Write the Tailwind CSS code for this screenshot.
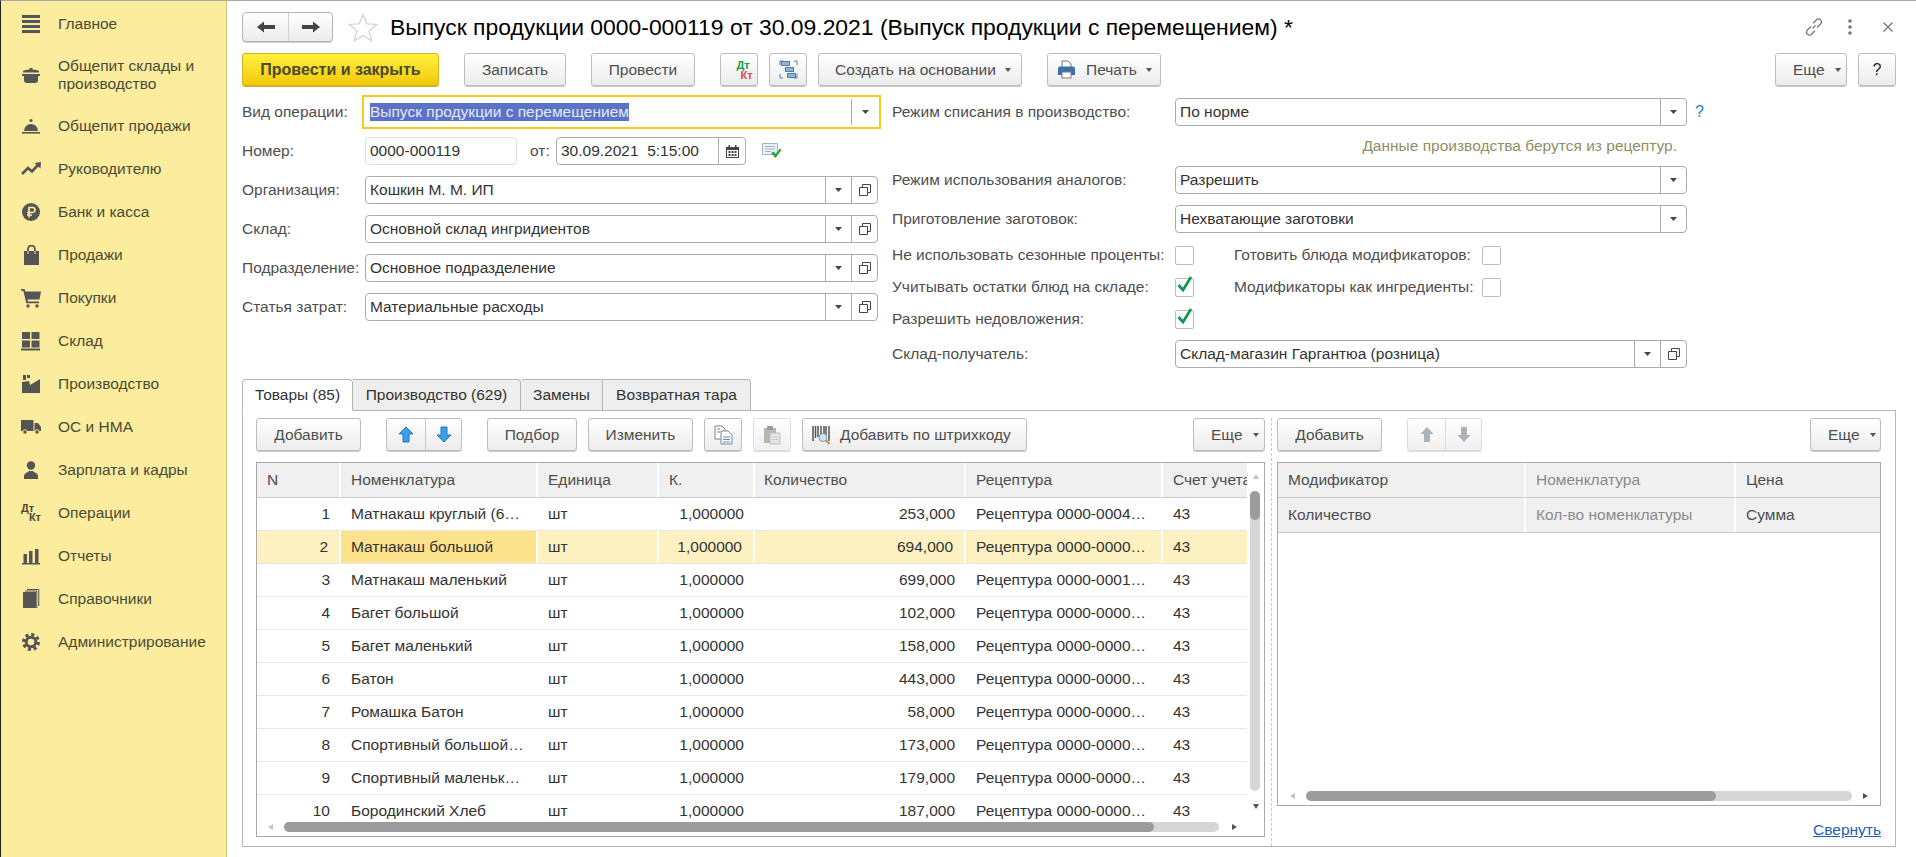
<!DOCTYPE html>
<html lang="ru">
<head>
  <meta charset="UTF-8">
  <title>Выпуск продукции</title>
  <script src="https://cdn.jsdelivr.net/npm/@tailwindcss/browser@4"></script>
</head>
<body class="w-[1916px] h-[857px] overflow-hidden bg-white flex font-['Liberation_Sans',Arial,sans-serif] text-[15.5px] text-[#4e4e4e]">

  <!-- sidebar -->
  <nav class="w-[227px] h-full shrink-0 bg-[#fbec9e] border-l border-l-[#222] border-r border-r-[#cfc27f] border-t border-t-[#a8a8a8] pt-[1px] text-[#4b4b35]">
    <a class="flex items-center h-[43px]"><svg class="ml-[20px] mr-[17px]" width="20" height="20" viewBox="0 0 20 20" fill="#555"><rect x="1" y="1" width="18" height="3"/><rect x="1" y="6" width="18" height="3"/><rect x="1" y="11" width="18" height="3"/><rect x="1" y="16" width="18" height="3"/></svg>Главное</a>
    <a class="flex items-center h-[59px] leading-[18px]"><svg class="ml-[20px] mr-[17px] shrink-0" width="20" height="20" viewBox="0 0 20 20" fill="#555"><path d="M8.500 3h3v1.500c3 .2 5.500.8 6.500 1.500v1.500H2V6c1-.7 3.500-1.300 6.500-1.500z"/><path d="M1 9h18v2h-2v4a3 3 0 0 1-3 3H6a3 3 0 0 1-3-3v-4H1z"/></svg><span>Общепит склады и<br>производство</span></a>
    <a class="flex items-center h-[43px]"><svg class="ml-[20px] mr-[17px]" width="20" height="20" viewBox="0 0 20 20" fill="#555"><circle cx="10" cy="4.500" r="1.500"/><path d="M3 15a7 7 0 0 1 14 0z"/><rect x="1" y="16" width="18" height="1.600"/></svg>Общепит продажи</a>
    <a class="flex items-center h-[43px]"><svg class="ml-[20px] mr-[17px]" width="20" height="20" viewBox="0 0 20 20" fill="#555"><path d="M1 15l6-6 4 3.500 6-6.500" fill="none" stroke="#555" stroke-width="2.600"/><path d="M13.500 4l6.500-1-.5 6.500z"/></svg>Руководителю</a>
    <a class="flex items-center h-[43px]"><svg class="ml-[20px] mr-[17px]" width="20" height="20" viewBox="0 0 20 20" fill="#555"><circle cx="10" cy="10" r="9"/><path d="M8 15.500V5.500h3.500a2.500 2.500 0 0 1 0 5H6M6 13h5" stroke="#fbec9e" fill="none" stroke-width="1.700"/></svg>Банк и касса</a>
    <a class="flex items-center h-[43px]"><svg class="ml-[20px] mr-[17px]" width="20" height="20" viewBox="0 0 20 20" fill="#555"><path d="M3 6h15v14H3z"/><path d="M7 6.500V4a3.500 3.500 0 0 1 7 0v2.500" fill="none" stroke="#555" stroke-width="1.800"/><path d="M7 6v3M14 6v3" stroke="#fbec9e" stroke-width="1"/></svg>Продажи</a>
    <a class="flex items-center h-[43px]"><svg class="ml-[20px] mr-[17px]" width="20" height="20" viewBox="0 0 20 20" fill="#555"><path d="M0 1h3.500l.8 2.500H20l-1.500 8H6.500l.4 2H18v1.800H5.300L2.300 2.800H0z"/><circle cx="7" cy="18" r="1.700"/><circle cx="16" cy="18" r="1.700"/></svg>Покупки</a>
    <a class="flex items-center h-[43px]"><svg class="ml-[20px] mr-[17px]" width="20" height="20" viewBox="0 0 20 20" fill="#555"><rect x="1" y="1" width="8" height="7"/><rect x="10.500" y="1" width="8" height="7"/><rect x="1" y="9.500" width="8" height="7"/><rect x="10.500" y="9.500" width="8" height="7"/><rect x="0" y="17.500" width="19" height="2"/></svg>Склад</a>
    <a class="flex items-center h-[43px]"><svg class="ml-[20px] mr-[17px]" width="20" height="20" viewBox="0 0 20 20" fill="#555"><path d="M2 1h3v5H2zM6 1h3v3H6z"/><path d="M1 8l7-1 1 4 10-6v14H1z"/></svg>Производство</a>
    <a class="flex items-center h-[43px]"><svg class="ml-[20px] mr-[17px]" width="20" height="20" viewBox="0 0 20 20" fill="#555"><path d="M0 3h12.500v11H0z"/><path d="M13.500 6h3.500l3 4v4h-6.500z"/><circle cx="4" cy="15" r="2.200" stroke="#fbec9e"/><circle cx="16" cy="15" r="2.200" stroke="#fbec9e"/></svg>ОС и НМА</a>
    <a class="flex items-center h-[43px]"><svg class="ml-[20px] mr-[17px]" width="20" height="20" viewBox="0 0 20 20" fill="#555"><circle cx="10" cy="5.500" r="4.200"/><path d="M3 19v-3c0-3 4-3.500 5-5h4c1 1.500 5 2 5 5v3z"/></svg>Зарплата и кадры</a>
    <a class="flex items-center h-[43px]"><span class="ml-[20px] mr-[17px] w-[20px] h-[20px] flex flex-col font-bold text-[11px] leading-[9px] pt-[1px]"><span>Дт</span><span class="self-end">Кт</span></span>Операции</a>
    <a class="flex items-center h-[43px]"><svg class="ml-[20px] mr-[17px]" width="20" height="20" viewBox="0 0 20 20" fill="#555"><rect x="2.500" y="8" width="3.500" height="9"/><rect x="8" y="5" width="3.500" height="12"/><rect x="14" y="3" width="3.500" height="14"/><rect x="1" y="17" width="18" height="1.500"/></svg>Отчеты</a>
    <a class="flex items-center h-[43px]"><svg class="ml-[20px] mr-[17px]" width="20" height="20" viewBox="0 0 20 20" fill="#555"><rect x="2" y="3" width="13" height="16"/><path d="M15.800 19V2H4M17.800 17V.5H6" fill="none" stroke="#555" stroke-width="1"/></svg>Справочники</a>
    <a class="flex items-center h-[43px]"><svg class="ml-[20px] mr-[17px]" width="20" height="20" viewBox="0 0 20 20" fill="none" stroke="#555"><circle cx="10" cy="10" r="4.800" stroke-width="3"/><circle cx="10" cy="10" r="7.500" stroke-width="3" stroke-dasharray="3.100 2.790"/></svg>Администрирование</a>
  </nav>

  <main class="flex-1 flex flex-col border-t border-t-[#a8a8a8] pl-[15px] pr-[20px] pt-[11px]">

    <!-- title -->
    <div class="flex items-center h-[30px]">
      <div class="flex w-[91px] h-[30px] border border-[#b5b5b5] rounded-[4px] bg-linear-to-b from-white to-[#ececec] shadow-[0_1px_0_#c8c8c8]">
        <div class="w-[46px] flex items-center justify-center border-r border-r-[#cfcfcf]"><svg width="18" height="12" viewBox="0 0 18 12" fill="#444"><path d="M0 6l7-5.500V4h11v4H7v3.500z"/></svg></div>
        <div class="flex-1 flex items-center justify-center"><svg width="18" height="12" viewBox="0 0 18 12" fill="#444"><path d="M18 6l-7-5.500V4H0v4h11v3.500z"/></svg></div>
      </div>
      <svg class="ml-[15px]" width="30" height="29" viewBox="0 0 30 29" fill="none" stroke="#cfcfcf" stroke-width="1.200"><path d="M15 1.500l3.800 9.300 10 .7-7.700 6.400 2.500 9.800L15 22.400l-8.600 5.300 2.500-9.800-7.700-6.400 10-.7z"/></svg>
      <h1 class="ml-[12px] text-[22.9px] text-black whitespace-nowrap">Выпуск продукции 0000-000119 от 30.09.2021 (Выпуск продукции с перемещением) *</h1>
      <div class="ml-auto flex items-center">
        <svg width="20" height="20" viewBox="0 0 20 20" fill="none" stroke="#777" stroke-width="1.300"><path d="M8.500 11.500l3-3M7 9.500L3 13.500a3 3 0 0 0 4 4.200l4-4M13 10.500l4-4a3 3 0 0 0-4-4.200l-4 4"/></svg>
        <svg class="ml-[24px]" width="4" height="16" viewBox="0 0 4 16" fill="#777"><circle cx="2" cy="2" r="1.800"/><circle cx="2" cy="8" r="1.800"/><circle cx="2" cy="14" r="1.800"/></svg>
        <svg class="ml-[31px] mr-[3px]" width="10" height="10" viewBox="0 0 10 10" stroke="#777" stroke-width="1.300"><path d="M.5.5l9 9M9.500.5l-9 9"/></svg>
      </div>
    </div>

    <!-- command bar -->
    <div class="flex h-[33px] mt-[11px]">
      <button class="w-[197px] border border-[#d6b21c] rounded-[3px] bg-linear-to-b from-[#fff03c] to-[#f3c900] font-bold text-[16px] text-[#4a4a2a] shadow-[0_1px_0_#cdb040]">Провести и закрыть</button>
      <button class="ml-[25px] w-[102px] border border-[#bdbdbd] rounded-[3px] bg-linear-to-b from-white to-[#ececec] shadow-[0_1px_0_#c8c8c8]">Записать</button>
      <button class="ml-[25px] w-[104px] border border-[#bdbdbd] rounded-[3px] bg-linear-to-b from-white to-[#ececec] shadow-[0_1px_0_#c8c8c8]">Провести</button>
      <button class="ml-[25px] w-[38px] border border-[#bdbdbd] rounded-[3px] bg-linear-to-b from-white to-[#ececec] shadow-[0_1px_0_#c8c8c8] flex flex-col justify-center font-bold text-[11px] leading-[10px] pl-[8px]"><span class="text-[#0ea04e]">Дт</span><span class="text-[#e04848] pl-[7px]">Кт</span></button>
      <button class="ml-[11px] w-[38px] border border-[#bdbdbd] rounded-[3px] bg-linear-to-b from-white to-[#ececec] shadow-[0_1px_0_#c8c8c8] flex items-center justify-center"><svg width="19" height="19" viewBox="0 0 19 19" fill="#8fb4d4" stroke="#4a7fae"><path d="M1 5V1h3M18 5V1h-3M1 14v4h3M18 14v4h-3" fill="none"/><rect x="2.500" y="1.500" width="8" height="4"/><rect x="6.500" y="7.500" width="8" height="4"/><rect x="8.500" y="13.500" width="8" height="4"/></svg></button>
      <button class="ml-[11px] w-[204px] border border-[#bdbdbd] rounded-[3px] bg-linear-to-b from-white to-[#ececec] shadow-[0_1px_0_#c8c8c8] flex items-center pl-[16px]">Создать на основании<svg class="ml-[9px]" width="6" height="4" viewBox="0 0 6 4" fill="#555"><path d="M0 0h6L3 4z"/></svg></button>
      <button class="ml-[25px] w-[114px] border border-[#bdbdbd] rounded-[3px] bg-linear-to-b from-white to-[#ececec] shadow-[0_1px_0_#c8c8c8] flex items-center pl-[9px]"><svg width="19" height="19" viewBox="0 0 19 19"><path d="M5 1h6l3 3v4H5z" fill="#fff" stroke="#777"/><path d="M1 8.500a2 2 0 0 1 2-2h13a2 2 0 0 1 2 2V15H1z" fill="#3b72a8"/><rect x="5" y="12" width="9" height="6" fill="#fff" stroke="#777"/></svg><span class="ml-[10px]">Печать</span><svg class="ml-[9px]" width="6" height="4" viewBox="0 0 6 4" fill="#555"><path d="M0 0h6L3 4z"/></svg></button>
      <button class="ml-auto w-[72px] border border-[#bdbdbd] rounded-[3px] bg-linear-to-b from-white to-[#ececec] shadow-[0_1px_0_#c8c8c8] flex items-center pl-[17px]">Еще<svg class="ml-[10px]" width="6" height="4" viewBox="0 0 6 4" fill="#555"><path d="M0 0h6L3 4z"/></svg></button>
      <button class="ml-[11px] w-[38px] border border-[#bdbdbd] rounded-[3px] bg-linear-to-b from-white to-[#ececec] shadow-[0_1px_0_#c8c8c8] text-[16px] text-[#222]">?</button>
    </div>

    <!-- form -->
    <div class="flex mt-[9px] h-[273px]">
      <div class="w-[639px]">
        <div class="flex items-center h-[34px]">
          <span class="w-[120px]">Вид операции:</span>
          <div class="w-[519px] h-[34px] border-2 border-[#fbc91a] flex items-center text-[#333]">
            <span class="ml-[6px] bg-[#5b73c6] text-[#e6e9f8] leading-[18px]">Выпуск продукции с перемещением</span>
            <span class="ml-auto w-[28px] h-[26px] border-l border-l-[#aaa] flex items-center justify-center"><svg width="7" height="4" viewBox="0 0 7 4" fill="#444"><path d="M0 0h7L3.500 4z"/></svg></span>
          </div>
        </div>
        <div class="flex items-center h-[28px] mt-[8px]">
          <span class="w-[123px]">Номер:</span>
          <div class="w-[152px] h-[28px] border border-[#dedede] rounded-[4px] pl-[4px] leading-[26px] text-[#333]">0000-000119</div>
          <span class="ml-[13px] w-[26px]">от:</span>
          <div class="w-[190px] h-[28px] border border-[#ababab] rounded-[4px] flex items-center text-[#333]">
            <span class="pl-[4px] whitespace-pre">30.09.2021  5:15:00</span>
            <span class="ml-auto w-[27px] h-full border-l border-l-[#ababab] flex items-center justify-center"><svg width="13" height="13" viewBox="0 0 13 13" fill="#444"><path d="M0 2h2.500V0h1.500v2h5V0h1.500v2H13v11H0zM1 5v7h11V5z"/><path d="M2.500 6h2v2h-2zM5.500 6h2v2h-2zM8.500 6h2v2h-2zM2.500 9h2v2h-2zM5.500 9h2v2h-2zM8.500 9h2v2h-2z"/></svg></span>
          </div>
          <svg class="ml-[16px]" width="20" height="16" viewBox="0 0 20 16"><path d="M.5.500h15v11H.5z" fill="#eaf1f7" stroke="#9db6cc"/><path d="M3 3.500h10M3 6h10M3 8.500h6" stroke="#9db6cc"/><path d="M9 10l3-1.500 1.500 2.500 4.500-5.500 1.500 1.500-6 8z" fill="#2fa52f"/></svg>
        </div>
        <div class="flex items-center h-[28px] mt-[11px]">
          <span class="w-[123px]">Организация:</span>
          <div class="w-[513px] h-[28px] border border-[#ababab] rounded-[4px] flex items-center text-[#333]">
            <span class="pl-[4px]">Кошкин М. М. ИП</span>
            <span class="ml-auto w-[26px] h-full border-l border-l-[#ababab] flex items-center justify-center"><svg width="7" height="4" viewBox="0 0 7 4" fill="#444"><path d="M0 0h7L3.500 4z"/></svg></span>
            <span class="w-[26px] h-full border-l border-l-[#ababab] flex items-center justify-center"><svg width="12" height="12" viewBox="0 0 12 12" fill="none" stroke="#444"><path d="M3.500 3.500V.5h8v8h-3"/><path d="M.5 3.500h8v8h-8z"/></svg></span>
          </div>
        </div>
        <div class="flex items-center h-[28px] mt-[11px]">
          <span class="w-[123px]">Склад:</span>
          <div class="w-[513px] h-[28px] border border-[#ababab] rounded-[4px] flex items-center text-[#333]">
            <span class="pl-[4px]">Основной склад ингридиентов</span>
            <span class="ml-auto w-[26px] h-full border-l border-l-[#ababab] flex items-center justify-center"><svg width="7" height="4" viewBox="0 0 7 4" fill="#444"><path d="M0 0h7L3.500 4z"/></svg></span>
            <span class="w-[26px] h-full border-l border-l-[#ababab] flex items-center justify-center"><svg width="12" height="12" viewBox="0 0 12 12" fill="none" stroke="#444"><path d="M3.500 3.500V.5h8v8h-3"/><path d="M.5 3.500h8v8h-8z"/></svg></span>
          </div>
        </div>
        <div class="flex items-center h-[28px] mt-[11px]">
          <span class="w-[123px]">Подразделение:</span>
          <div class="w-[513px] h-[28px] border border-[#ababab] rounded-[4px] flex items-center text-[#333]">
            <span class="pl-[4px]">Основное подразделение</span>
            <span class="ml-auto w-[26px] h-full border-l border-l-[#ababab] flex items-center justify-center"><svg width="7" height="4" viewBox="0 0 7 4" fill="#444"><path d="M0 0h7L3.500 4z"/></svg></span>
            <span class="w-[26px] h-full border-l border-l-[#ababab] flex items-center justify-center"><svg width="12" height="12" viewBox="0 0 12 12" fill="none" stroke="#444"><path d="M3.500 3.500V.5h8v8h-3"/><path d="M.5 3.500h8v8h-8z"/></svg></span>
          </div>
        </div>
        <div class="flex items-center h-[28px] mt-[11px]">
          <span class="w-[123px]">Статья затрат:</span>
          <div class="w-[513px] h-[28px] border border-[#ababab] rounded-[4px] flex items-center text-[#333]">
            <span class="pl-[4px]">Материальные расходы</span>
            <span class="ml-auto w-[26px] h-full border-l border-l-[#ababab] flex items-center justify-center"><svg width="7" height="4" viewBox="0 0 7 4" fill="#444"><path d="M0 0h7L3.500 4z"/></svg></span>
            <span class="w-[26px] h-full border-l border-l-[#ababab] flex items-center justify-center"><svg width="12" height="12" viewBox="0 0 12 12" fill="none" stroke="#444"><path d="M3.500 3.500V.5h8v8h-3"/><path d="M.5 3.500h8v8h-8z"/></svg></span>
          </div>
        </div>
      </div>

      <div class="ml-[11px] w-[815px] pt-[3px]">
        <div class="flex items-center h-[28px]">
          <span class="w-[283px]">Режим списания в производство:</span>
          <div class="w-[512px] h-[28px] border border-[#ababab] rounded-[4px] flex items-center text-[#333]">
            <span class="pl-[4px]">По норме</span>
            <span class="ml-auto w-[26px] h-full border-l border-l-[#ababab] flex items-center justify-center"><svg width="7" height="4" viewBox="0 0 7 4" fill="#444"><path d="M0 0h7L3.500 4z"/></svg></span>
          </div>
          <span class="ml-[8px] text-[#1b82d2] text-[16px]">?</span>
        </div>
        <div class="w-[785px] h-[29px] mt-[5px] flex items-center justify-end text-[#8f8f62]">Данные производства берутся из рецептур.</div>
        <div class="flex items-center h-[28px] mt-[6px]">
          <span class="w-[283px]">Режим использования аналогов:</span>
          <div class="w-[512px] h-[28px] border border-[#ababab] rounded-[4px] flex items-center text-[#333]">
            <span class="pl-[4px]">Разрешить</span>
            <span class="ml-auto w-[26px] h-full border-l border-l-[#ababab] flex items-center justify-center"><svg width="7" height="4" viewBox="0 0 7 4" fill="#444"><path d="M0 0h7L3.500 4z"/></svg></span>
          </div>
        </div>
        <div class="flex items-center h-[28px] mt-[11px]">
          <span class="w-[283px]">Приготовление заготовок:</span>
          <div class="w-[512px] h-[28px] border border-[#ababab] rounded-[4px] flex items-center text-[#333]">
            <span class="pl-[4px]">Нехватающие заготовки</span>
            <span class="ml-auto w-[26px] h-full border-l border-l-[#ababab] flex items-center justify-center"><svg width="7" height="4" viewBox="0 0 7 4" fill="#444"><path d="M0 0h7L3.500 4z"/></svg></span>
          </div>
        </div>
        <div class="flex items-center h-[32px] mt-[6px]">
          <span class="w-[283px] whitespace-nowrap">Не использовать сезонные проценты:</span>
          <span class="w-[19px] h-[19px] border border-[#bdbdbd] rounded-[2px]"></span>
          <span class="ml-[40px] w-[248px] whitespace-nowrap">Готовить блюда модификаторов:</span>
          <span class="w-[19px] h-[19px] border border-[#bdbdbd] rounded-[2px]"></span>
        </div>
        <div class="flex items-center h-[32px]">
          <span class="w-[283px]">Учитывать остатки блюд на складе:</span>
          <span class="w-[19px] h-[19px] border border-[#bdbdbd] rounded-[2px] flex items-start"><svg class="-mt-[3px] ml-[1px]" width="16" height="17" viewBox="0 0 16 17" fill="none" stroke="#0b9a4c" stroke-width="2.800"><path d="M1.500 9l4.500 5 8-13"/></svg></span>
          <span class="ml-[40px] w-[248px] whitespace-nowrap">Модификаторы как ингредиенты:</span>
          <span class="w-[19px] h-[19px] border border-[#bdbdbd] rounded-[2px]"></span>
        </div>
        <div class="flex items-center h-[32px]">
          <span class="w-[283px]">Разрешить недовложения:</span>
          <span class="w-[19px] h-[19px] border border-[#bdbdbd] rounded-[2px] flex items-start"><svg class="-mt-[3px] ml-[1px]" width="16" height="17" viewBox="0 0 16 17" fill="none" stroke="#0b9a4c" stroke-width="2.800"><path d="M1.500 9l4.500 5 8-13"/></svg></span>
        </div>
        <div class="flex items-center h-[28px] mt-[5px]">
          <span class="w-[283px]">Склад-получатель:</span>
          <div class="w-[512px] h-[28px] border border-[#ababab] rounded-[4px] flex items-center text-[#333]">
            <span class="pl-[4px]">Склад-магазин Гаргантюа (розница)</span>
            <span class="ml-auto w-[26px] h-full border-l border-l-[#ababab] flex items-center justify-center"><svg width="7" height="4" viewBox="0 0 7 4" fill="#444"><path d="M0 0h7L3.500 4z"/></svg></span>
            <span class="w-[26px] h-full border-l border-l-[#ababab] flex items-center justify-center"><svg width="12" height="12" viewBox="0 0 12 12" fill="none" stroke="#444"><path d="M3.500 3.500V.5h8v8h-3"/><path d="M.5 3.500h8v8h-8z"/></svg></span>
          </div>
        </div>
      </div>
    </div>

    <!-- tabs -->
    <div class="flex h-[32px] mt-[11px] -mb-px relative z-10">
      <div class="w-[111px] h-[32px] border border-[#b5b5b5] border-b-white bg-white rounded-t-[4px] flex items-center justify-center text-[#333]">Товары (85)</div>
      <div class="w-[168px] h-[32px] border border-l-0 border-[#b5b5b5] bg-[#eeeeee] rounded-tr-[4px] flex items-center justify-center text-[#333]">Производство (629)</div>
      <div class="w-[82px] h-[32px] border border-l-0 border-[#b5b5b5] bg-[#eeeeee] rounded-t-[2px] flex items-center justify-center text-[#333]">Замены</div>
      <div class="w-[148px] h-[32px] border border-l-0 border-[#b5b5b5] bg-[#eeeeee] rounded-tr-[4px] flex items-center justify-center text-[#333]">Возвратная тара</div>
    </div>

    <!-- panel -->
    <div class="h-[437px] w-[1654px] border border-[#b5b5b5] flex pl-[13px] pt-[7px]">

      <!-- left -->
      <section class="w-[1009px]">
        <div class="flex h-[33px]">
          <button class="w-[105px] border border-[#bdbdbd] rounded-[3px] bg-linear-to-b from-white to-[#ececec] shadow-[0_1px_0_#c8c8c8]">Добавить</button>
          <div class="ml-[25px] w-[76px] flex border border-[#bdbdbd] rounded-[3px] bg-linear-to-b from-white to-[#ececec] shadow-[0_1px_0_#c8c8c8]">
            <span class="w-[39px] border-r border-r-[#c8c8c8] flex items-center justify-center"><svg width="16" height="17" viewBox="0 0 16 17" fill="#3a9fe6" stroke="#2279b8"><path d="M8 1l7 7h-4v8H5V8H1z"/></svg></span>
            <span class="flex-1 flex items-center justify-center"><svg width="16" height="17" viewBox="0 0 16 17" fill="#3a9fe6" stroke="#2279b8"><path d="M8 16l7-7h-4V1H5v8H1z"/></svg></span>
          </div>
          <button class="ml-[25px] w-[90px] border border-[#bdbdbd] rounded-[3px] bg-linear-to-b from-white to-[#ececec] shadow-[0_1px_0_#c8c8c8]">Подбор</button>
          <button class="ml-[11px] w-[105px] border border-[#bdbdbd] rounded-[3px] bg-linear-to-b from-white to-[#ececec] shadow-[0_1px_0_#c8c8c8]">Изменить</button>
          <button class="ml-[11px] w-[38px] border border-[#bdbdbd] rounded-[3px] bg-linear-to-b from-white to-[#ececec] shadow-[0_1px_0_#c8c8c8] flex items-center justify-center"><svg width="19" height="20" viewBox="0 0 19 20" fill="#fff" stroke="#6d88a3"><path d="M1 1h7l3 3v10H1z"/><path d="M7 6h7l4 4v9H7z"/><path d="M9 12h7M9 14.500h7M9 17h7M3 4h3M3 7h3"/></svg></button>
          <button class="ml-[11px] w-[38px] border border-[#dcdcdc] rounded-[3px] bg-linear-to-b from-white to-[#f0f0f0] shadow-[0_1px_0_#dcdcdc] flex items-center justify-center"><svg width="19" height="20" viewBox="0 0 19 20"><path d="M1 3h12v15H1z" fill="#bcb6ae"/><rect x="4" y="1" width="6" height="4" fill="#9a9a9a"/><path d="M7 8h10v11H7z" fill="#e6e6e6" stroke="#bdbdbd"/><path d="M9 12h6M9 14.500h6" stroke="#c8c8c8"/></svg></button>
          <button class="ml-[11px] w-[225px] border border-[#bdbdbd] rounded-[3px] bg-linear-to-b from-white to-[#ececec] shadow-[0_1px_0_#c8c8c8] flex items-center pl-[9px]"><svg width="19" height="20" viewBox="0 0 19 20"><path d="M1 1v15M3.500 1v12M6 1v11M9 1v10M12 1v11M14 1v10M17 1v15" stroke="#555" stroke-width="1.500"/><circle cx="11" cy="12.500" r="4" fill="#cfe3f2" stroke="#7c96ad"/><path d="M14 15.500l3.500 3.500" stroke="#c98a3a" stroke-width="2"/></svg><span class="ml-[9px] whitespace-nowrap">Добавить по штрихкоду</span></button>
          <button class="ml-auto w-[72px] border border-[#bdbdbd] rounded-[3px] bg-linear-to-b from-white to-[#ececec] shadow-[0_1px_0_#c8c8c8] flex items-center pl-[17px]">Еще<svg class="ml-[10px]" width="6" height="4" viewBox="0 0 6 4" fill="#555"><path d="M0 0h6L3 4z"/></svg></button>
        </div>

        <div class="relative mt-[11px] h-[375px] border border-[#a9a9a9] overflow-hidden text-[#333]">
          <div class="w-[990px] grid grid-cols-[84px_197px_121px_96px_211px_197px_84px] h-[35px] bg-[#f0f0f0] border-b border-b-[#c9c9c9] text-[#4e4e4e] leading-[33px]">
            <div class="pl-[10px] border-r-2 border-r-white">N</div>
            <div class="pl-[10px] border-r-2 border-r-white">Номенклатура</div>
            <div class="pl-[10px] border-r-2 border-r-white">Единица</div>
            <div class="pl-[10px] border-r-2 border-r-white">К.</div>
            <div class="pl-[9px] border-r-2 border-r-white">Количество</div>
            <div class="pl-[10px] border-r-2 border-r-white">Рецептура</div>
            <div class="pl-[10px] whitespace-nowrap overflow-hidden">Счет учета</div>
          </div>
          <div id="rows"></div>

          <!-- vertical scrollbar -->
          <div class="absolute top-0 right-0 w-[17px] h-[330px] bg-white">
            <svg class="absolute left-[6px] top-[11px]" width="6" height="5" viewBox="0 0 6 5" fill="#c4c4c4"><path d="M3 0l3 5H0z"/></svg>
            <div class="absolute left-[3px] top-[28px] w-[10px] h-[300px] rounded-[5px] bg-[#d6d6d6]"></div>
            <div class="absolute left-[3px] top-[28px] w-[10px] h-[29px] rounded-[5px] bg-[#9c9c9c]"></div>
          </div>
          <svg class="absolute right-[5px] bottom-[27px]" width="6" height="5" viewBox="0 0 6 5" fill="#555"><path d="M3 5l3-5H0z"/></svg>

          <!-- horizontal scrollbar -->
          <div class="absolute left-0 right-0 bottom-0 h-[14px] bg-white">
            <svg class="absolute left-[11px] top-[2px]" width="5" height="6" viewBox="0 0 5 6" fill="#c4c4c4"><path d="M0 3l5-3v6z"/></svg>
            <div class="absolute left-[27px] top-0 w-[935px] h-[10px] rounded-[5px] bg-[#d6d6d6]"></div>
            <div class="absolute left-[27px] top-0 w-[870px] h-[10px] rounded-[5px] bg-[#9c9c9c]"></div>
            <svg class="absolute left-[975px] top-[2px]" width="5" height="6" viewBox="0 0 5 6" fill="#555"><path d="M5 3L0 0v6z"/></svg>
          </div>
        </div>
      </section>

      <!-- splitter -->
      <div class="ml-[6px] w-0 h-[428px] border-l border-dashed border-l-[#c8c8c8]"></div>

      <!-- right -->
      <section class="ml-[5px] w-[604px] flex flex-col">
        <div class="flex h-[33px]">
          <button class="w-[105px] border border-[#bdbdbd] rounded-[3px] bg-linear-to-b from-white to-[#ececec] shadow-[0_1px_0_#c8c8c8]">Добавить</button>
          <div class="ml-[25px] w-[75px] flex border border-[#dcdcdc] rounded-[3px] bg-linear-to-b from-white to-[#f0f0f0] shadow-[0_1px_0_#dcdcdc]">
            <span class="w-[38px] border-r border-r-[#dcdcdc] flex items-center justify-center"><svg width="14" height="17" viewBox="0 0 14 17" fill="#aab2ba"><path d="M7 1l6.500 7H10v8H4V8H.5z"/></svg></span>
            <span class="flex-1 flex items-center justify-center"><svg width="14" height="17" viewBox="0 0 14 17" fill="#aab2ba"><path d="M7 16l6.500-7H10V1H4v8H.5z"/></svg></span>
          </div>
          <button class="ml-auto w-[71px] border border-[#bdbdbd] rounded-[3px] bg-linear-to-b from-white to-[#ececec] shadow-[0_1px_0_#c8c8c8] flex items-center pl-[17px]">Еще<svg class="ml-[10px]" width="6" height="4" viewBox="0 0 6 4" fill="#555"><path d="M0 0h6L3 4z"/></svg></button>
        </div>

        <div class="relative mt-[11px] h-[344px] border border-[#a9a9a9] overflow-hidden">
          <div class="grid grid-cols-[248px_210px_144px] h-[35px] bg-[#f0f0f0] border-b border-b-[#c9c9c9] leading-[33px]">
            <div class="pl-[10px] border-r-2 border-r-white">Модификатор</div>
            <div class="pl-[10px] border-r-2 border-r-white text-[#8a8a8a]">Номенклатура</div>
            <div class="pl-[10px]">Цена</div>
          </div>
          <div class="grid grid-cols-[248px_210px_144px] h-[35px] bg-[#f0f0f0] border-b border-b-[#c9c9c9] leading-[33px]">
            <div class="pl-[10px] border-r-2 border-r-white">Количество</div>
            <div class="pl-[10px] border-r-2 border-r-white text-[#8a8a8a]">Кол-во номенклатуры</div>
            <div class="pl-[10px]">Сумма</div>
          </div>
          <!-- horizontal scrollbar -->
          <svg class="absolute left-[12px] bottom-[6px]" width="5" height="6" viewBox="0 0 5 6" fill="#c4c4c4"><path d="M0 3l5-3v6z"/></svg>
          <div class="absolute left-[28px] bottom-[4px] w-[546px] h-[10px] rounded-[5px] bg-[#d6d6d6]"></div>
          <div class="absolute left-[28px] bottom-[4px] w-[410px] h-[10px] rounded-[5px] bg-[#9c9c9c]"></div>
          <svg class="absolute right-[12px] bottom-[6px]" width="5" height="6" viewBox="0 0 5 6" fill="#555"><path d="M5 3L0 0v6z"/></svg>
        </div>

        <a class="self-end mt-[12px] text-[#1b5fb8] underline">Свернуть</a>
      </section>
    </div>
  </main>

  <script>
    const rows = [
      ['1', 'Матнакаш круглый (6…', '253,000', 'Рецептура 0000-0004…'],
      ['2', 'Матнакаш большой', '694,000', 'Рецептура 0000-0000…'],
      ['3', 'Матнакаш маленький', '699,000', 'Рецептура 0000-0001…'],
      ['4', 'Багет большой', '102,000', 'Рецептура 0000-0000…'],
      ['5', 'Багет маленький', '158,000', 'Рецептура 0000-0000…'],
      ['6', 'Батон', '443,000', 'Рецептура 0000-0000…'],
      ['7', 'Ромашка Батон', '58,000', 'Рецептура 0000-0000…'],
      ['8', 'Спортивный большой…', '173,000', 'Рецептура 0000-0000…'],
      ['9', 'Спортивный маленьк…', '179,000', 'Рецептура 0000-0000…'],
      ['10', 'Бородинский Хлеб', '187,000', 'Рецептура 0000-0000…']
    ];
    document.getElementById('rows').innerHTML = rows.map(function(r) {
      const sel = r[0] === '2';
      const row = 'w-[990px] h-[33px] grid grid-cols-[84px_197px_121px_96px_211px_197px_84px] border-b border-b-[#e8e8e8] leading-[32px]';
      const cell = sel ? 'bg-[#fdf1c2] border-r-2 border-r-white' : '';
      const name = sel ? 'bg-[#fde28c] border-r-2 border-r-white' : '';
      return '<div class="' + row + '">' +
        '<div class="text-right pr-[11px] ' + cell + '">' + r[0] + '</div>' +
        '<div class="pl-[10px] whitespace-nowrap ' + name + '">' + r[1] + '</div>' +
        '<div class="pl-[10px] ' + cell + '">шт</div>' +
        '<div class="text-right pr-[11px] ' + cell + '">1,000000</div>' +
        '<div class="text-right pr-[11px] ' + cell + '">' + r[2] + '</div>' +
        '<div class="pl-[10px] whitespace-nowrap ' + cell + '">' + r[3] + '</div>' +
        '<div class="pl-[10px] ' + (sel ? 'bg-[#fdf1c2]' : '') + '">43</div>' +
        '</div>';
    }).join('');
  </script>
</body>
</html>
